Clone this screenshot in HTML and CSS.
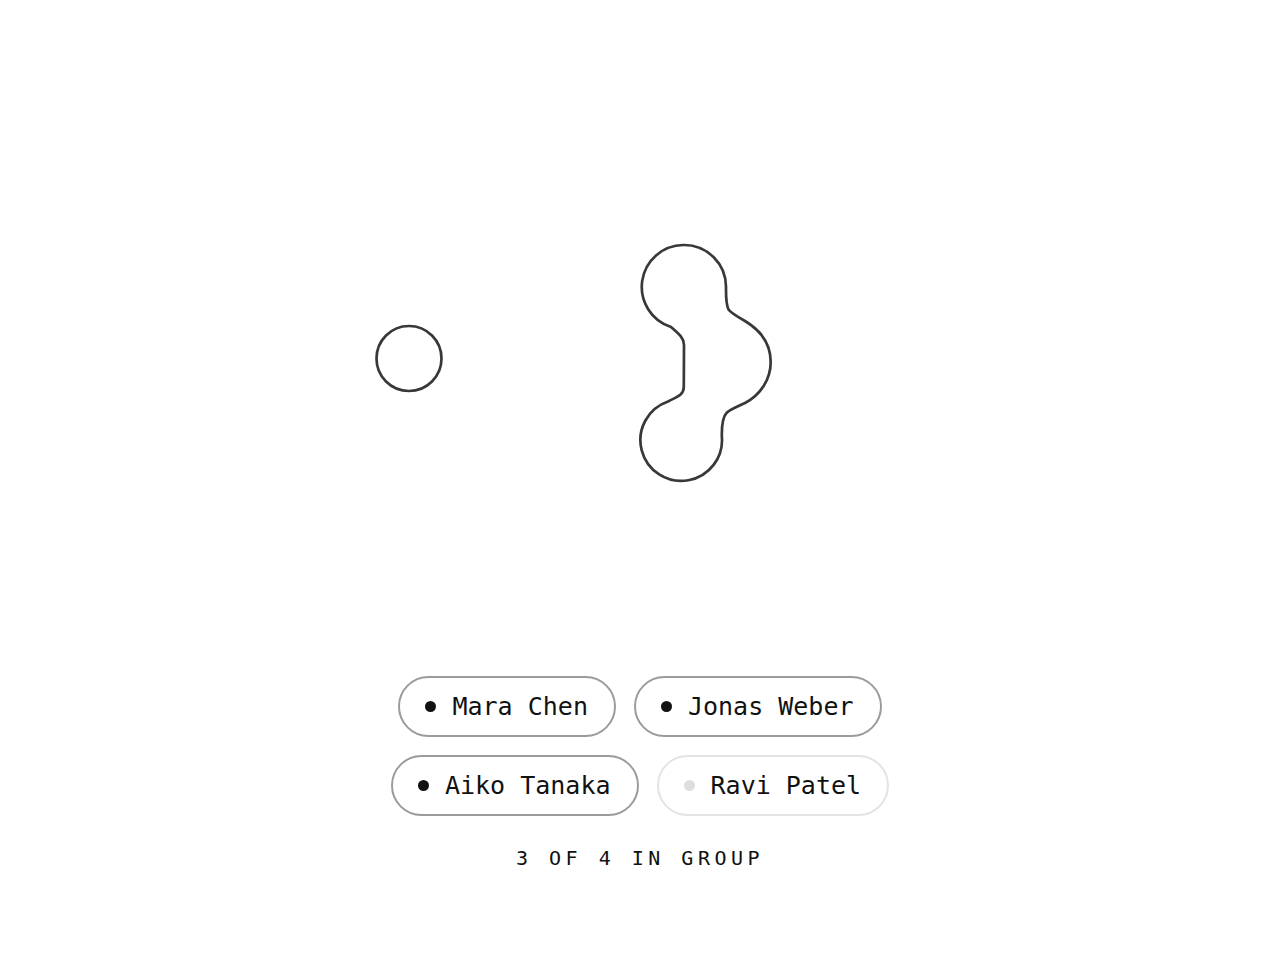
FILE: index.html
```html
<!DOCTYPE html>
<html lang="en">
<head>
<meta charset="utf-8">
<title>Group</title>
<link rel="stylesheet" href="styles.css">
</head>
<body>
<main class="page">
  <div class="stage">
    <svg class="canvas" viewBox="0 0 1280 660" width="1280" height="660" aria-hidden="true">
      <circle class="blob" cx="409" cy="358.5" r="32.5"/>
      <path class="blob" d="M 683 245
        A 42 42 0 0 1 726 288
        C 726 296, 725.8 304, 728.5 309.5
        C 731 313, 737 316.5, 745 321
        C 760 330, 770.7 344, 770.7 362
        C 770.7 380, 760 395, 745 403
        C 737 407, 730 409.5, 726.5 413
        C 722.5 417, 721.7 424, 721.8 436
        A 40.8 40.8 0 1 1 668 401.5
        C 676 397, 683.5 396, 683.8 387
        L 684 345
        C 684 338, 679 334, 671 327
        A 42 42 0 0 1 683 245 Z"/>
    </svg>
  </div>
  <div class="pills">
    <div class="pill"><span class="dot"></span><span class="name">Mara Chen</span></div>
    <div class="pill"><span class="dot"></span><span class="name">Jonas Weber</span></div>
    <div class="pill"><span class="dot"></span><span class="name">Aiko Tanaka</span></div>
    <div class="pill pill-off"><span class="dot"></span><span class="name">Ravi Patel</span></div>
  </div>
  <p class="caption">3 OF 4 IN GROUP</p>
</main>
</body>
</html>
```
FILE: styles.css
```css
html, body {
  margin: 0;
  padding: 0;
  background: #ffffff;
}

body {
  font-family: "DejaVu Sans Mono", "Liberation Mono", monospace;
  color: #111111;
}

.page {
  width: 1280px;
  height: 960px;
  display: flex;
  flex-direction: column;
  align-items: center;
}

.stage {
  width: 1280px;
  height: 660px;
}

.canvas {
  display: block;
}

.blob {
  fill: none;
  stroke: #383838;
  stroke-width: 2.7;
}

.pills {
  margin-top: 16px;
  max-width: 560px;
  display: flex;
  flex-wrap: wrap;
  justify-content: center;
  column-gap: 18px;
  row-gap: 18px;
}

.pill {
  display: flex;
  align-items: center;
  padding: 14px 26px 14px 25px;
  border: 2px solid #9b9b9b;
  border-radius: 999px;
  font-size: 25px;
  line-height: 29px;
  white-space: nowrap;
}

.dot {
  width: 11px;
  height: 11px;
  border-radius: 50%;
  background: #111111;
  margin-right: 16px;
  flex: none;
}

.pill-off {
  border-color: #e3e3e3;
}

.pill-off .dot {
  background: #dedede;
}

.caption {
  margin: 30px 0 0;
  font-size: 20px;
  line-height: 24px;
  letter-spacing: 4.5px;
  color: #111111;
}
```
